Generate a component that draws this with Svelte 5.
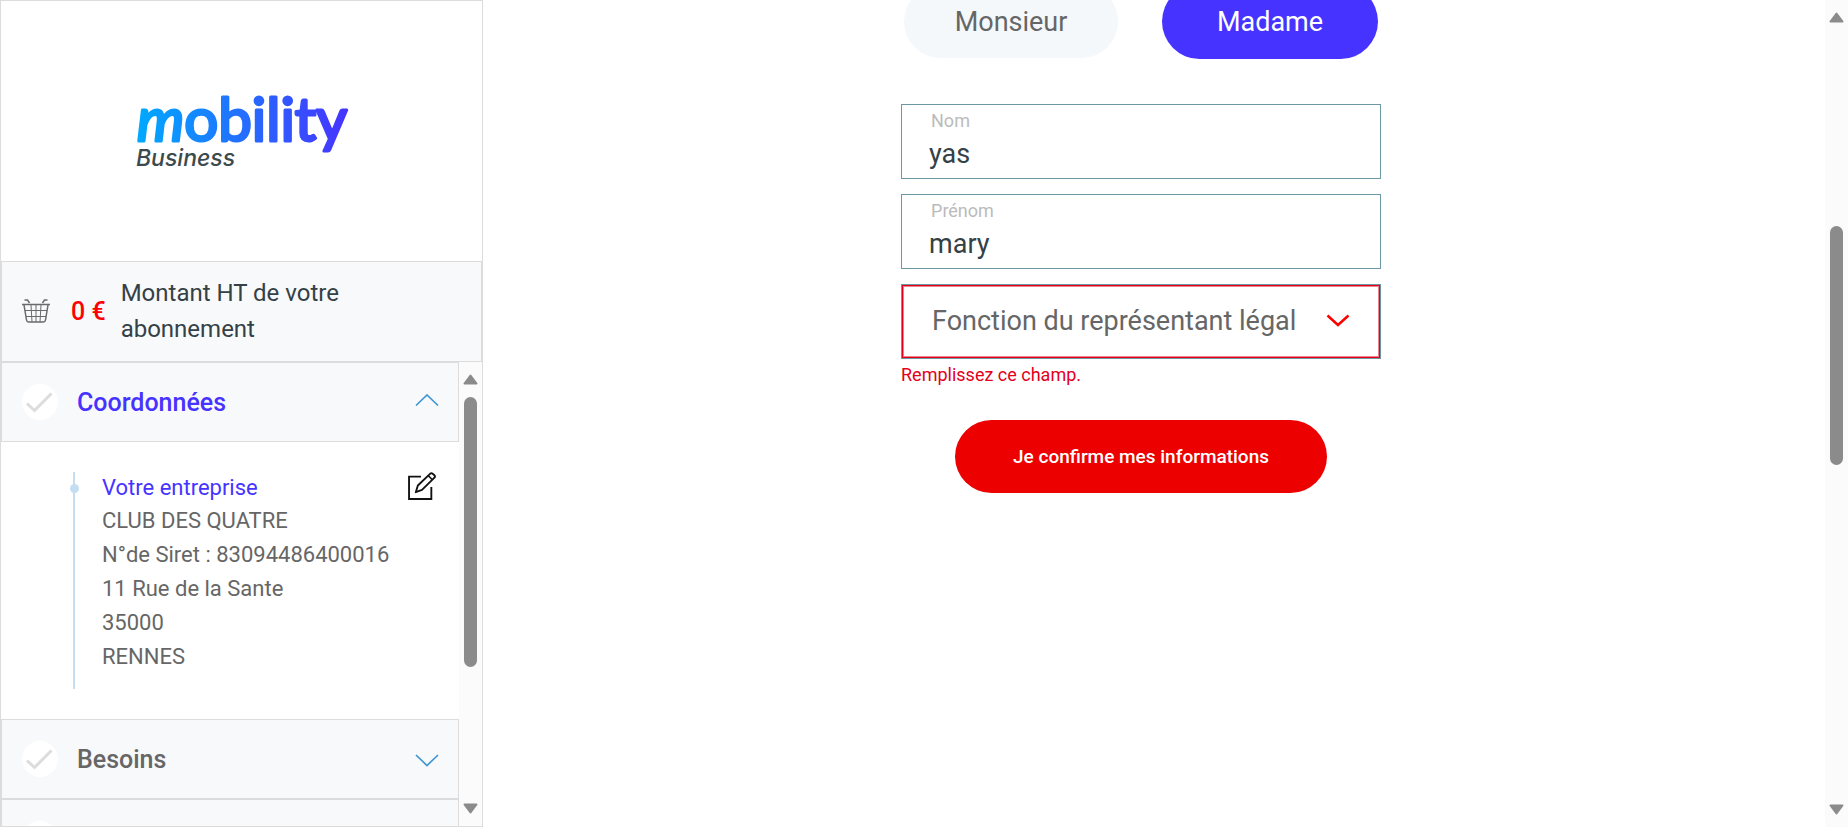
<script>
  let civility = $state('madame');
  let lastName = $state('yas');
  let firstName = $state('mary');
  let role = $state('');
  let open = $state(true);

  const company = [
    'CLUB DES QUATRE',
    'N°de Siret : 83094486400016',
    '11 Rue de la Sante',
    '35000',
    'RENNES'
  ];
</script>

{#snippet badge()}
  <svg class="badge" viewBox="0 0 36 36" aria-hidden="true">
    <circle cx="18" cy="18" r="18" fill="#fff" />
    <path d="M5 19.5l7.5 7L29.500 9.500" fill="none" stroke="#dcdcdc" stroke-width="3" />
  </svg>
{/snippet}

{#snippet scrollbar(start, size)}
  <div class="scrollbar" aria-hidden="true">
    <svg viewBox="0 0 15 11"><path d="M7.500 1.500L13.500 9.500H1.500Z" fill="#8b8b8b" stroke="#8b8b8b" stroke-width="2" stroke-linejoin="round" /></svg>
    <div class="track">
      <div class="thumb" style="top: {start}%; height: {size}%"></div>
    </div>
    <svg viewBox="0 0 15 11"><path d="M7.500 9.500L13.500 1.500H1.500Z" fill="#8b8b8b" stroke="#8b8b8b" stroke-width="2" stroke-linejoin="round" /></svg>
  </div>
{/snippet}

<div class="page">
  <aside>
    <div class="brand">
      <svg class="logo" viewBox="0 0 212 90" role="img" aria-label="mobility Business">
        <defs>
          <linearGradient id="brand" gradientUnits="userSpaceOnUse" x1="0" y1="0" x2="212" y2="0">
            <stop offset="0" stop-color="#00aaff" />
            <stop offset="1" stop-color="#4733ff" />
          </linearGradient>
        </defs>
        <text class="wordmark" x="1" y="56" fill="url(#brand)" stroke="url(#brand)"><tspan font-style="italic">m</tspan>obility</text>
        <text class="tagline" x="0" y="81">Business</text>
      </svg>
    </div>

    <div class="total">
      <svg class="basket" viewBox="0 0 28 24" fill="none" stroke="#6b6b6b" aria-hidden="true">
        <path d="M0 5.500H28" stroke-width="1.500" />
        <path d="M2 6L4.500 21Q4.800 23 6.500 23H21.500Q23.200 23 23.500 21L26 6" stroke-width="1.500" />
        <path d="M3 11.500H25M4 17.500H24M9 6L10 23M14 6V23M19 6L18 23" />
        <path d="M2.500 1H5.500L7.500 4M25.500 1H22.500L20.500 4" stroke-width="1.500" />
      </svg>
      <strong>0 €</strong>
      <p>Montant HT de votre abonnement</p>
    </div>

    <div class="steps">
      <div class="list">
        <button class="step active" type="button" aria-expanded={open} onclick={() => (open = !open)}>
          {@render badge()}
          <span>Coordonnées</span>
          <svg class="chevron" viewBox="0 0 24 16" aria-hidden="true"><path d="M1 11.500L12 1L23 11.500" fill="none" stroke="#3f96d2" stroke-width="1.700" /></svg>
        </button>
        {#if open}
          <section class="details">
            <div class="timeline">
              <h2>Votre entreprise</h2>
              {#each company as line}
                <p>{line}</p>
              {/each}
            </div>
            <button class="edit" type="button" aria-label="Modifier">
              <svg viewBox="0 0 27 27" fill="none" stroke="#111" stroke-width="1.800" aria-hidden="true">
                <path d="M12.500 4.500H1V26H22.500V14.500" />
                <path d="M7.500 19.500L9.500 13L21.500 1.500Q22.500 .8 23.500 1.500L25.500 3.200Q26.500 4.200 25.500 5.500L13.500 17.200Z" stroke-linejoin="round" />
                <path d="M19.500 3.500L23.500 7.500" stroke-width="1.400" />
              </svg>
            </button>
          </section>
        {/if}
        <button class="step" type="button" aria-expanded="false">
          {@render badge()}
          <span>Besoins</span>
          <svg class="chevron" viewBox="0 0 24 16" aria-hidden="true"><path d="M1 4L12 14.500L23 4" fill="none" stroke="#3f96d2" stroke-width="1.700" /></svg>
        </button>
        <button class="step" type="button" aria-expanded="false" aria-label="Étape suivante">
          {@render badge()}
        </button>
      </div>
      {@render scrollbar(0, 68.5)}
    </div>
  </aside>

  <main>
    <form onsubmit={(e) => e.preventDefault()}>
      <div class="choices" role="radiogroup" aria-label="Civilité">
        <label class="pill" class:selected={civility === 'monsieur'}>
          <input type="radio" name="civility" value="monsieur" bind:group={civility} />
          Monsieur
        </label>
        <label class="pill" class:selected={civility === 'madame'}>
          <input type="radio" name="civility" value="madame" bind:group={civility} />
          Madame
        </label>
      </div>

      <div class="field">
        <label for="last-name">Nom</label>
        <input id="last-name" type="text" bind:value={lastName} />
      </div>
      <div class="field">
        <label for="first-name">Prénom</label>
        <input id="first-name" type="text" bind:value={firstName} />
      </div>
      <div class="select">
        <select aria-label="Fonction du représentant légal" aria-invalid="true" aria-describedby="role-error" bind:value={role}>
          <option value="">Fonction du représentant légal</option>
        </select>
        <svg viewBox="0 0 24 13" aria-hidden="true"><path d="M1.500 1.500L12 11L22.500 1.500" fill="none" stroke="#f00" stroke-width="2.500" /></svg>
      </div>
      <p class="error" id="role-error">Remplissez ce champ.</p>
      <button class="submit" type="submit">Je confirme mes informations</button>
    </form>
  </main>

  {@render scrollbar(25.2, 31.6)}
</div>

<style>
  :global(body) {
    margin: 0;
    background: #fff;
    font-family: Roboto, "Liberation Sans", sans-serif;
    color: #344146;
  }

  .page,
  .page * {
    box-sizing: border-box;
  }

  .page {
    display: grid;
    grid-template-columns: minmax(0, 36fr) minmax(0, 100fr) 23px;
    height: 100vh;
    overflow: hidden;
  }

  button,
  input,
  select {
    font: inherit;
    color: inherit;
    margin: 0;
  }

  button {
    cursor: pointer;
  }

  p,
  h2 {
    margin: 0;
    font-weight: 400;
  }

  aside {
    display: flex;
    flex-direction: column;
    min-height: 0;
    border: 1px solid #dcdcdc;
  }

  .brand {
    display: flex;
    justify-content: center;
    padding: 84px 0 86px;
  }

  .logo {
    display: block;
    width: 212px;
    height: 90px;
    overflow: visible;
  }

  .wordmark {
    font: 400 60px Lato, sans-serif;
    stroke-width: 3px;
    stroke-linejoin: round;
  }

  .tagline {
    font: italic 500 23px Inter, sans-serif;
    fill: #3c4a4d;
  }

  .total {
    display: flex;
    align-items: center;
    padding: 13px 20px 14px;
    border: 1px solid #dcdcdc;
    background: #f8f9fb;
  }

  .basket {
    flex: none;
    width: 28px;
    height: 24px;
  }

  .total strong {
    flex: none;
    margin-left: 21px;
    font-size: 25px;
    font-weight: 500;
    color: #f00;
  }

  .total p {
    max-width: 260px;
    margin-left: 15px;
    font-size: 24px;
    line-height: 36px;
  }

  .steps {
    display: grid;
    grid-template-columns: minmax(0, 1fr) 23px;
    flex: 1;
    min-height: 0;
  }

  .list {
    overflow: hidden;
  }

  .step {
    display: flex;
    align-items: center;
    width: 100%;
    height: 80px;
    padding: 0 19px 0 20px;
    border: 1px solid #dcdcdc;
    border-radius: 0;
    background: #f8f9fb;
    font-size: 25px;
    font-weight: 500;
    color: #666;
    text-align: left;
  }

  .step.active {
    color: #4733ff;
  }

  .step span {
    flex: 1;
    margin-left: 19px;
  }

  .badge {
    flex: none;
    width: 36px;
    height: 36px;
  }

  .chevron {
    flex: none;
    width: 24px;
    height: 16px;
  }

  .details {
    display: flex;
    align-items: flex-start;
    justify-content: space-between;
    padding: 30px 23px 30px 72px;
  }

  .timeline {
    position: relative;
    height: 217px;
    padding-left: 27px;
    border-left: 2px solid #c5ddf0;
    font-size: 22px;
    line-height: 34px;
    color: #666;
  }

  .timeline::before {
    content: "";
    position: absolute;
    top: 12px;
    left: -5px;
    width: 9px;
    height: 9px;
    border-radius: 50%;
    background: #c5ddf0;
  }

  .timeline h2 {
    font-size: 22px;
    line-height: 32px;
    color: #4733ff;
  }

  .edit {
    padding: 0;
    border: 0;
    background: none;
  }

  .edit svg {
    display: block;
    width: 28px;
    height: 28px;
  }

  .scrollbar {
    display: flex;
    flex-direction: column;
    align-items: center;
    padding: 12px 0;
    background: #fbfbfb;
  }

  .scrollbar svg {
    width: 15px;
    height: 11px;
  }

  .track {
    position: relative;
    flex: 1;
    width: 13px;
    margin: 12px 0;
  }

  .thumb {
    position: absolute;
    width: 100%;
    border-radius: 7px;
    background: #8b8b8b;
  }

  main {
    min-width: 0;
    padding-right: 26px;
  }

  form {
    display: flex;
    flex-direction: column;
    gap: 15px;
    width: 100%;
    max-width: 480px;
    margin: -16px auto 0;
  }

  .choices {
    display: flex;
    align-items: center;
    justify-content: space-between;
    margin-bottom: 30px;
    padding: 0 3px;
  }

  .pill {
    display: flex;
    align-items: center;
    justify-content: center;
    width: 214px;
    height: 73px;
    border-radius: 38px;
    background: #f4f8fb;
    font-size: 27px;
    color: #666;
    cursor: pointer;
  }

  .pill.selected {
    width: 216px;
    height: 75px;
    background: #4733ff;
    color: #fff;
  }

  .pill input {
    position: absolute;
    opacity: 0;
    pointer-events: none;
  }

  .field {
    display: flex;
    flex-direction: column;
    height: 75px;
    padding: 5px 27px;
    border: 1px solid #6c98a4;
  }

  .field label {
    padding-left: 2px;
    font-size: 18px;
    line-height: 21px;
    color: #bbb;
  }

  .field input {
    width: 100%;
    height: 38px;
    margin-top: 4px;
    padding: 0;
    border: 0;
    outline: 0;
    background: none;
    font-size: 27px;
    line-height: 38px;
  }

  .select {
    position: relative;
  }

  .select select {
    display: block;
    width: 100%;
    height: 75px;
    padding: 0 60px 2px 30px;
    appearance: none;
    border: 1px solid #6c98a4;
    border-radius: 0;
    background: #fff;
    box-shadow: inset 0 0 0 1px #e3001b, inset 0 0 0 2px #f0808d;
    font-size: 27px;
    color: #666;
  }

  .select svg {
    position: absolute;
    top: 30px;
    right: 31px;
    width: 24px;
    height: 13px;
    pointer-events: none;
  }

  .error {
    margin-top: -10px;
    font-size: 18px;
    line-height: 22px;
    color: #e3001b;
  }

  .submit {
    align-self: center;
    height: 73px;
    margin-top: 19px;
    padding: 0 58px;
    border: 0;
    border-radius: 37px;
    background: #ed0000;
    font-size: 19px;
    font-weight: 500;
    color: #fff;
  }
</style>
